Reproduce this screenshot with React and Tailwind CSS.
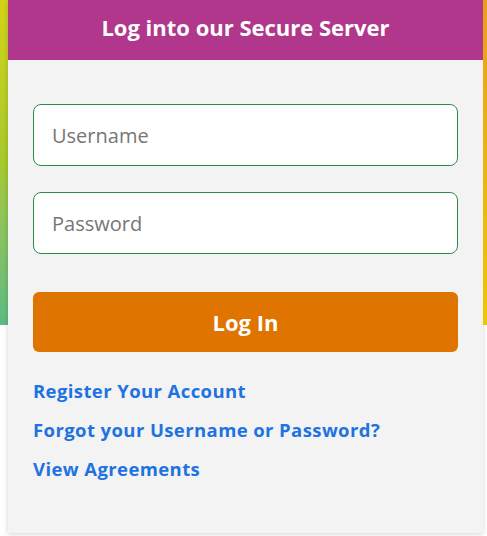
import React from "react";

function LoginCard() {
  return (
    <div className="w-[475px] h-[533px] bg-[#f3f3f3] shadow-[0_1px_5px_rgba(0,0,0,0.18)] flex flex-col">
      <div className="h-[60px] bg-[#b0378b] flex items-center justify-center pb-[6px]">
        <h1 className="text-white text-[22px] font-bold font-['Open_Sans',sans-serif]">
          Log into our Secure Server
        </h1>
      </div>
      <form className="flex flex-col px-[25px] pt-[44px]">
        <input
          type="text"
          placeholder="Username"
          className="h-[62px] w-full bg-white border border-[#2e8b47] rounded-lg px-[18px] text-[20px] font-['Open_Sans',sans-serif] placeholder:text-[#767676] outline-none"
        />
        <input
          type="password"
          placeholder="Password"
          className="mt-[26px] h-[62px] w-full bg-white border border-[#2e8b47] rounded-lg px-[18px] text-[20px] font-['Open_Sans',sans-serif] placeholder:text-[#767676] outline-none"
        />
        <button
          type="button"
          className="mt-[38px] h-[60px] w-full bg-[#e07400] rounded-md text-white text-[22px] font-bold font-['Open_Sans',sans-serif]"
        >
          Log In
        </button>
        <div className="mt-[27px] flex flex-col gap-[15px] items-start font-['Open_Sans',sans-serif] font-bold text-[18.5px] leading-[24px] tracking-[0.4px] text-[#1f73e0]">
          <a href="#">Register Your Account</a>
          <a href="#">Forgot your Username or Password?</a>
          <a href="#">View Agreements</a>
        </div>
      </form>
    </div>
  );
}

export default function App() {
  return (
    <div className="flex bg-white min-h-[536px]">
      <div className="w-2 h-[325px] bg-linear-to-b from-[#d3d416] via-[#a6c92c] to-[#5cba84]" />
      <LoginCard />
      <div className="w-1 h-[325px] bg-linear-to-b from-[#e99f1e] to-[#eec600]" />
    </div>
  );
}
